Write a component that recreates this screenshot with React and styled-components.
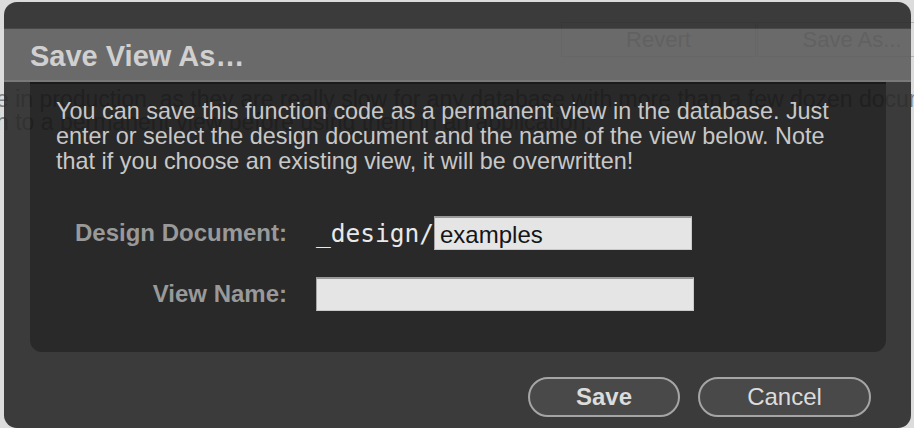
import React from 'react'
import styled, { createGlobalStyle } from 'styled-components'

const GlobalStyle = createGlobalStyle`
  html, body {
    margin: 0;
    padding: 0;
  }
  body {
    background: #dcdcdc;
    font-family: "Liberation Sans", Arial, Helvetica, sans-serif;
  }
`;

export default function App() {
  return (
    <>
      <GlobalStyle />
      <Page>
        <Toolbar>
          <GhostButton $width={195}>Revert</GhostButton>
          <GhostButton $width={190}>Save As...</GhostButton>
        </Toolbar>
        <Warning>
          e in production, as they are really slow for any database with more than a few dozen documents.
          <br />
          h to a permanent view before using them in an application.
        </Warning>

        <Dialog>
          <Title>Save View As…</Title>
          <Fieldset>
            <Intro>
              You can save this function code as a permanent view in the database. Just
              <br />
              enter or select the design document and the name of the view below. Note
              <br />
              that if you choose an existing view, it will be overwritten!
            </Intro>
            <Form>
              <Label>Design Document:</Label>
              <Value>
                <Prefix>_design/</Prefix>
                <Field $width={258} defaultValue="examples" />
              </Value>
              <Label>View Name:</Label>
              <Value>
                <Field $width={378} defaultValue="" />
              </Value>
            </Form>
          </Fieldset>
          <Buttons>
            <Button $primary $width={152}>Save</Button>
            <Button $width={173}>Cancel</Button>
          </Buttons>
        </Dialog>
      </Page>
    </>
  )
}

const Page = styled.div`
  position: relative;
  width: 914px;
  height: 428px;
  overflow: hidden;
  color: #808080;
`;

const Toolbar = styled.div`
  display: flex;
  padding: 22px 0 0 561px;
  gap: 1px;
`;

const GhostButton = styled.div`
  flex: none;
  width: ${p => p.$width}px;
  height: 35px;
  box-sizing: border-box;
  border: 1px solid #b4b4b4;
  font-size: 22px;
  line-height: 33px;
  text-align: center;
  white-space: nowrap;
`;

const Warning = styled.p`
  margin: 31px 0 0 -4px;
  font-size: 23px;
  line-height: 23px;
  white-space: nowrap;
`;

/* the dialog is drawn at 90% opacity over the page, so the page shows through */
const Dialog = styled.div`
  position: absolute;
  left: 4px;
  top: 2px;
  width: 907px;
  height: 426px;
  box-sizing: border-box;
  padding: 26px 25px 0 26px;
  display: flex;
  flex-direction: column;
  background: #2a2a2a;
  border-radius: 13px;
  opacity: 0.9;
`;

const Title = styled.h2`
  margin: 0 -25px 0 -26px;
  padding: 11px 26px 8px;
  background: #5e5e5e;
  border-top: 1px solid #3a3a3a;
  border-bottom: 2px solid #6f6f6f;
  color: #cfcfcf;
  font-size: 29px;
  line-height: 32px;
  font-weight: bold;
`;

const Fieldset = styled.div`
  padding: 15px 26px 41px;
  background: #161616;
  border-top: 2px solid #070707;
  border-radius: 0 0 12px 12px;
`;

const Intro = styled.p`
  margin: 0;
  color: #c6c6c6;
  font-size: 23.4px;
  line-height: 25px;
  white-space: nowrap;
`;

const Form = styled.div`
  display: grid;
  grid-template-columns: 231px auto;
  column-gap: 29px;
  row-gap: 27px;
  align-items: center;
  margin-top: 42px;
`;

const Label = styled.div`
  text-align: right;
  color: #929292;
  font-size: 24px;
  font-weight: bold;
`;

const Value = styled.div`
  display: flex;
  align-items: center;
`;

const Prefix = styled.span`
  font-family: "DejaVu Sans Mono", "Liberation Mono", monospace;
  font-size: 24.5px;
  color: #ebebeb;
`;

const Field = styled.input`
  width: ${p => p.$width}px;
  height: 34px;
  box-sizing: border-box;
  margin: 0;
  padding: 2px 5px 0;
  background: #e7e7e7;
  border: 1px solid #c8c8c8;
  border-top: 2px solid #929292;
  border-left-color: #a0a0a0;
  color: #000;
  font-family: "Liberation Sans", Arial, sans-serif;
  font-size: 24px;
  outline: none;
`;

const Buttons = styled.div`
  display: flex;
  justify-content: flex-end;
  gap: 18px;
  margin: 25px 15px 0 0;
`;

const Button = styled.button`
  width: ${p => p.$width}px;
  height: 40px;
  padding: 0;
  background: #3a3a3a;
  border: 2px solid #a0a0a0;
  border-radius: 20px;
  color: #dcdcdc;
  font-family: "Liberation Sans", Arial, sans-serif;
  font-size: 24px;
  font-weight: ${p => (p.$primary ? 'bold' : 'normal')};
`;
